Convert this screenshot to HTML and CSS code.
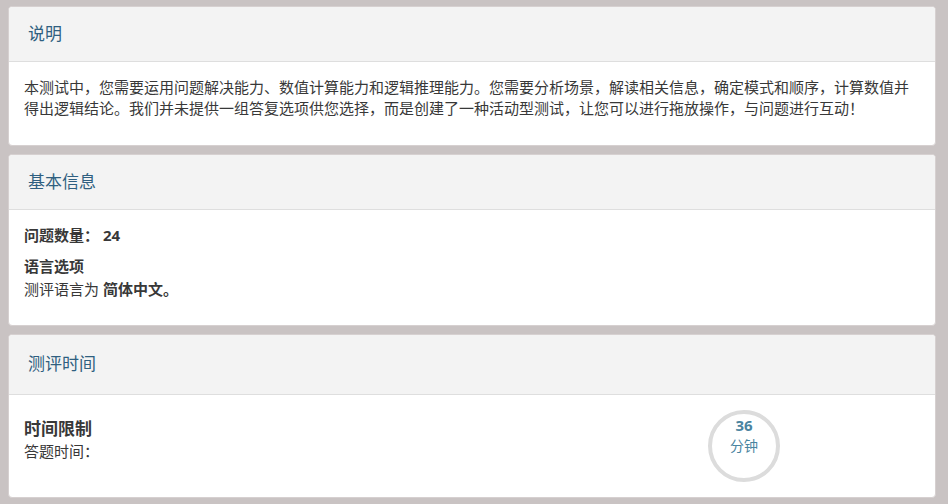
FILE: index.html
```html
<!DOCTYPE html>
<html lang="zh-CN">
<head>
<meta charset="UTF-8">
<meta name="viewport" content="width=device-width, initial-scale=1.0">
<title>测评说明</title>
<link rel="stylesheet" href="styles.css">
</head>
<body>

<main class="page">
  <section class="panel">
    <header class="panel-head">
      <h2>说明</h2>
    </header>
    <div class="panel-body">
      <p class="intro">本测试中，您需要运用问题解决能力、数值计算能力和逻辑推理能力。您需要分析场景，解读相关信息，确定模式和顺序，计算数值并得出逻辑结论。我们并未提供一组答复选项供您选择，而是创建了一种活动型测试，让您可以进行拖放操作，与问题进行互动！</p>
    </div>
  </section>

  <section class="panel">
    <header class="panel-head">
      <h2>基本信息</h2>
    </header>
    <div class="panel-body">
      <p class="count"><strong>问题数量： 24</strong></p>
      <p class="lang"><strong>语言选项</strong><br>测评语言为 <strong>简体中文。</strong></p>
    </div>
  </section>

  <section class="panel">
    <header class="panel-head tall">
      <h2>测评时间</h2>
    </header>
    <div class="panel-body time-row">
      <div class="time-info">
        <h3>时间限制</h3>
        <p>答题时间：</p>
      </div>
      <div class="time-dial">
        <div class="dial">
          <b>36</b>
          <span>分钟</span>
        </div>
      </div>
    </div>
  </section>
</main>

</body>
</html>
```

FILE: styles.css
```css
body {
  margin: 0;
  background: #c9c3c3;
  font-family: "Open Sans", "Noto Sans CJK SC", sans-serif;
  color: #383838;
}
.page {
  display: flex;
  flex-direction: column;
  gap: 8px;
  padding: 6px 12px 7px 8px;
}
.panel {
  background: white;
  border: 1px solid #d6d0d0;
  border-radius: 4px;
  overflow: hidden;
}
.panel-head {
  background: #f3f3f3;
  border-bottom: 1px solid #dedede;
  padding: 15px 19px;
}
.panel-head.tall {
  padding: 17px 19px 18px 19px;
}
.panel-head h2 {
  margin: 0;
  font-size: 17px;
  font-weight: normal;
  line-height: 24px;
  color: #2f5f80;
}
.panel-body {
  padding: 15px;
}
.panel-body p {
  margin: 0;
  font-size: 15px;
  line-height: 21px;
}
.panel-body .intro {
  margin-bottom: 11px;
}
.panel-body .count {
  margin-bottom: 9px;
}
.panel-body .lang {
  line-height: 23px;
  margin-bottom: 9px;
}
.time-row {
  display: grid;
  grid-template-columns: 1fr 352px;
}
.time-info {
  padding-top: 7px;
}
.time-info h3 {
  margin: 0;
  font-size: 17px;
  line-height: 24px;
  font-weight: bold;
}
.time-dial {
  display: flex;
  justify-content: center;
}
.dial {
  width: 64px;
  height: 63px;
  padding-top: 1px;
  border: 4px solid #dcdcdc;
  border-radius: 50%;
  display: flex;
  flex-direction: column;
  align-items: center;
  color: #4a849f;
}
.dial b {
  font-size: 15px;
  line-height: 21px;
}
.dial span {
  font-size: 14px;
  line-height: 20px;
}
```
